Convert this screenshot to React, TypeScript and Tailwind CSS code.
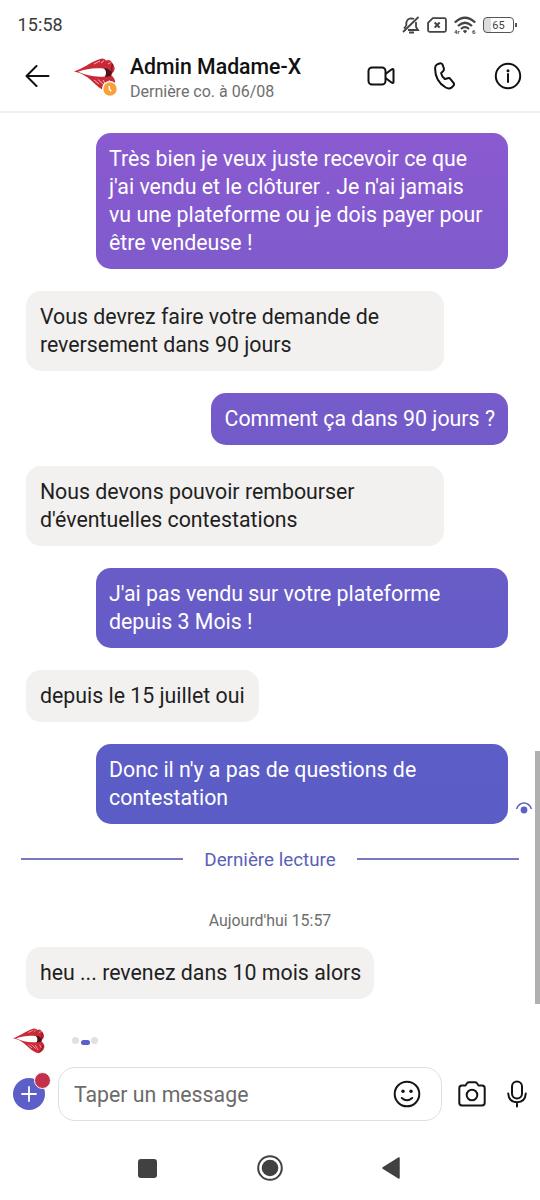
import React from 'react';

type Message = {
    from: 'me' | 'them';
    lines: string[];
    className: string;
};

const messages: Message[] = [
    {
        from: 'me',
        lines: ["Très bien je veux juste recevoir ce que", "j'ai vendu et le clôturer . Je n'ai jamais", "vu une plateforme ou je dois payer pour", "être vendeuse !"],
        className: "w-[412.5px] from-[#8a5ad0] to-[#7f5bcc]"
    },
    {
        from: 'them',
        lines: ["Vous devrez faire votre demande de", "reversement dans 90 jours"],
        className: "w-[418px]"
    },
    {
        from: 'me',
        lines: ["Comment ça dans 90 jours ?"],
        className: "w-[297px] from-[#775bca] to-[#725bc9]"
    },
    {
        from: 'them',
        lines: ["Nous devons pouvoir rembourser", "d'éventuelles contestations"],
        className: "w-[418px]"
    },
    {
        from: 'me',
        lines: ["J'ai pas vendu sur votre plateforme", "depuis 3 Mois !"],
        className: "w-[412.5px] from-[#695cc7] to-[#655cc7]"
    },
    {
        from: 'them',
        lines: ["depuis le 15 juillet oui"],
        className: "w-[233px]"
    },
    {
        from: 'me',
        lines: ["Donc il n'y a pas de questions de", "contestation"],
        className: "w-[412.5px] from-[#5c5dc7] to-[#5b5cc5]"
    }
];

const Lips = ({ className }: { className: string }) => (
    <svg viewBox="0 0 42 34" className={className}>
        <path d="M0 13.5 C8 11 17 4 26 1 Q30 -.5 32 2.5 Q36 1 38 4.5 Q42 9 40 13 L37 17 Q42 21 41 26 Q39 32 33 33 Q27 32 21 26 C14 19 8 15 0 13.5Z" fill="#c92a38" />
        <path d="M28 10 L33 10.5 L38 14 L37 18 L31 19Z" fill="#4d1219" />
        <path d="M4 13.8 C12 10.5 21 9.5 30 10.5 Q33.5 14 31 18.5 C20 19.5 12 17 4 13.8Z" fill="#fff" />
        <path d="M20 6 L26 3 M27 5 L30 2.5 M34 6 L36.5 4.5 M20 22 L25 26 M24 21.5 L30 27 M29 22 L33 29 M35 22 L37 26" stroke="#f6b3b3" strokeWidth="1" />
        <path d="M38.5 6 Q37 11 38 14 M34 32 Q38 29 39.5 23" stroke="#7b1420" strokeWidth="1.2" fill="none" />
    </svg>
);

const StatusBar = () => (
    <div className="flex h-10 items-center justify-between pt-[10px] pl-[17.5px] pr-[23px]">
        <span className="text-[18px] leading-none tracking-[0.1px] text-[#3a3a3a]">15:58</span>
        <div className="flex items-center gap-[7px] text-[#444]">
            <svg width="18" height="18" viewBox="0 0 18 18" fill="none" stroke="currentColor" strokeWidth="1.8">
                <path d="M1 16 L16.5 1 M4.3 10 V7 Q5 2.5 9 2.3 Q10.5 2.3 12 3 M14 6 V11 L16 14 H6 M2 12.5 L4 10 M7 16.5 H12" />
            </svg>
            <svg width="20" height="16" viewBox="0 0 19 15" fill="none" stroke="currentColor" strokeWidth="1.7">
                <path d="M5.5 1 H16.5 Q18 1 18 2.5 V12.5 Q18 14 16.5 14 H2.5 Q1 14 1 12.5 V5.5 Z" />
                <path d="M7.3 5.2 L12 10 M12 5.2 L7.3 10" strokeWidth="2" />
            </svg>
            <svg width="22" height="18" viewBox="0 0 22 18" fill="none" stroke="currentColor" strokeWidth="2.3">
                <path d="M.8 6.5 Q11 -3 21.2 6.5 M4 10 Q11 3.5 18 10 M7 13 Q11 9.3 15 13" />
                <path d="M8.8 15 Q11 13 13.2 15 L11 17.5Z" fill="currentColor" stroke="none" />
                <text x="0" y="18" fontSize="6" fontWeight="700" fill="currentColor" stroke="none">4r</text>
                <text x="18" y="18" fontSize="6" fontWeight="700" fill="currentColor" stroke="none">6</text>
            </svg>
            <div className="flex items-center gap-px">
                <div className="flex h-[16px] w-[31px] items-center justify-center rounded-[4px] border-[1.5px] border-[#555] bg-linear-to-r from-[#ddd] from-25% to-white to-25% text-[11px] leading-none">65</div>
                <div className="h-[4px] w-[2px] bg-[#555]"></div>
            </div>
        </div>
    </div>
);

const Header = () => (
    <header className="flex h-[73px] items-center border-b-2 border-[#f0f0f0] pl-[25px]">
        <svg width="25" height="22" viewBox="0 0 25 22" fill="none" stroke="#111" strokeWidth="2" strokeLinecap="round" strokeLinejoin="round">
            <path d="M11.5 1 L1.5 11 L11.5 21 M2 11 H23.5" />
        </svg>
        <div className="relative ml-[24px] h-[42px] w-[42px]">
            <Lips className="mt-[3px] h-[34px] w-[42px]" />
            <svg className="absolute top-[26px] left-[28px]" width="16" height="16" viewBox="0 0 16 16">
                <circle cx="8" cy="8" r="8" fill="#fff" />
                <circle cx="8" cy="8" r="6.7" fill="#f8a13c" />
                <path d="M7.3 5 V8.3 L9.3 10.3" stroke="#fff" strokeWidth="1.4" fill="none" />
            </svg>
        </div>
        <div className="ml-[14px] flex-1 pt-[6px]">
            <div className="text-[21.25px] leading-[26px] font-medium text-[#111]">Admin Madame-X</div>
            <div className="text-[16px] leading-[24px] text-[#6e6e6e]">Dernière co. à 06/08</div>
        </div>
        <div className="flex items-center pr-[18px] text-[#111]">
            <svg width="28" height="20" viewBox="0 0 28 20" fill="none" stroke="currentColor" strokeWidth="2" strokeLinejoin="round">
                <rect x="1.5" y="1.5" width="17" height="17" rx="3.5" />
                <path d="M18.5 8 L24.8 3.3 Q26.5 2.5 26.5 4.3 V15.7 Q26.5 17.5 24.8 16.7 L18.5 12" />
            </svg>
            <svg className="ml-[39px]" width="22" height="28" viewBox="0 0 22 28" fill="none" stroke="currentColor" strokeWidth="2" strokeLinejoin="round">
                <path d="M3.2 2.4 L5.5 1.5 Q7.9 .8 8.8 3.2 L9.8 6.2 Q10.3 7.8 9.2 9 L7.1 11.1 Q7.6 14.2 10.8 17 L13.8 16.2 Q15.5 15.8 16.5 17.1 L19.5 20.8 Q20.7 22.5 19.2 24 L17.5 25.6 Q15 27.4 11.7 25.5 C4 20.8 1 13.8 1.1 6 Q1.2 3.4 3.2 2.4Z" />
            </svg>
            <svg className="ml-[38px]" width="28" height="28" viewBox="0 0 28 28" fill="none" stroke="currentColor" strokeWidth="2">
                <circle cx="14" cy="14" r="12.2" />
                <path d="M14 12 V20" strokeLinecap="round" />
                <circle cx="14" cy="8.7" r="1.5" fill="currentColor" stroke="none" />
            </svg>
        </div>
    </header>
);

const Bubble = ({ message }: { message: Message }) => {
    const side = message.from === 'me'
        ? "self-end bg-linear-to-b text-white"
        : "self-start bg-[#f2f1f0] text-[#1f1f1f]";

    return (
        <div className={`rounded-[15px] px-[13.5px] py-3 text-[21.33px] leading-7 whitespace-nowrap ${side} ${message.className}`}>
            {message.lines.map((line) => (
                <div key={line}>{line}</div>
            ))}
        </div>
    );
};

const Composer = () => (
    <div className="flex items-center pl-[13px] text-[#151515]">
        <div className="relative flex h-8 w-8 items-center justify-center rounded-full bg-[#5b5fc7]">
            <svg width="16" height="16" viewBox="0 0 16 16" stroke="#fff" strokeWidth="1.8" strokeLinecap="round">
                <path d="M8 1 V15 M1 8 H15" />
            </svg>
            <span className="absolute -top-[6px] left-[20.5px] h-[17px] w-[17px] rounded-full border-[1.5px] border-white bg-[#c4314b]"></span>
        </div>
        <div className="ml-[13px] flex h-[54px] w-[384px] items-center justify-between rounded-[17px] border-[1.5px] border-[#dfdfdf] pr-[20px] pl-[15px]">
            <span className="pt-px text-[21.3px] text-[#6b6b6b]">Taper un message</span>
            <svg width="28" height="28" viewBox="0 0 28 28" fill="none" stroke="currentColor" strokeWidth="2">
                <circle cx="14" cy="14" r="12.3" />
                <path d="M8.8 18 Q14 22.5 19.2 18" strokeLinecap="round" />
                <circle cx="10" cy="11.3" r="1.7" fill="currentColor" stroke="none" />
                <circle cx="18" cy="11.3" r="1.7" fill="currentColor" stroke="none" />
            </svg>
        </div>
        <svg className="ml-[16px]" width="28" height="26" viewBox="0 0 28 26" fill="none" stroke="currentColor" strokeWidth="2" strokeLinejoin="round">
            <path d="M4 4.5 H7.5 L9 2.3 Q9.7 1.3 11 1.3 H17 Q18.3 1.3 19 2.3 L20.5 4.5 H24 Q26.7 4.5 26.7 7.2 V21.8 Q26.7 24.5 24 24.5 H4 Q1.3 24.5 1.3 21.8 V7.2 Q1.3 4.5 4 4.5Z" />
            <circle cx="14" cy="14" r="5.3" />
        </svg>
        <svg className="ml-[21px]" width="20" height="28" viewBox="0 0 20 28" fill="none" stroke="currentColor" strokeWidth="2" strokeLinecap="round">
            <rect x="5" y="1.5" width="10" height="17" rx="5" />
            <path d="M1.2 13.5 Q1.8 22 10 22.3 Q18.2 22 18.8 13.5 M10 22.3 V26.5" />
        </svg>
    </div>
);

const NavBar = () => (
    <nav className="flex items-center pl-[138px] text-[#414141]">
        <div className="h-[19px] w-[19px] rounded-[3px] bg-[#414141]"></div>
        <svg className="ml-[100px]" width="26" height="26" viewBox="0 0 26 26">
            <circle cx="13" cy="13" r="11.8" fill="none" stroke="currentColor" strokeWidth="2" />
            <circle cx="13" cy="13" r="8.3" fill="currentColor" />
        </svg>
        <svg className="ml-[99px]" width="18" height="22" viewBox="0 0 18 22">
            <path d="M1 11 L17 1 V21Z" fill="currentColor" stroke="currentColor" strokeWidth="1.5" strokeLinejoin="round" />
        </svg>
    </nav>
);

const App = () => {
    return (
        <div className="relative flex h-[1200px] w-[540px] flex-col overflow-hidden bg-white font-[Roboto,sans-serif]">
            <StatusBar />
            <Header />

            {/* Conversation */}
            <main className="flex h-[711px] flex-col gap-[21.75px] pt-5 pr-8 pl-[26.4px]">
                {messages.map((message) => (
                    <Bubble key={message.lines[0]} message={message} />
                ))}
            </main>

            {/* Last read divider */}
            <div className="flex h-[70px] items-center justify-between px-[21px] text-[18.8px] text-[#5b5fb8]">
                <div className="h-[2px] w-[162px] bg-[#7779bd]"></div>
                <span className="pt-[2px]">Dernière lecture</span>
                <div className="h-[2px] w-[162px] bg-[#7779bd]"></div>
            </div>

            <div className="mt-[15px] text-center text-[15.9px] leading-6 text-[#6e6e6e]">Aujourd'hui 15:57</div>
            <div className="mt-[14px] flex flex-col pl-[26.4px]">
                <Bubble message={{ from: 'them', lines: ["heu ... revenez dans 10 mois alors"], className: "w-[348px]" }} />
            </div>

            {/* Typing indicator */}
            <div className="flex h-[68px] items-center pt-[15px] pl-[13px]">
                <Lips className="h-[26px] w-8" />
                <div className="ml-[27px] flex items-center gap-[1.5px]">
                    <span className="h-[7px] w-[7px] rounded-full bg-[#e0e0e0]"></span>
                    <span className="mt-[3px] h-[5px] w-[9px] rounded-full bg-[#5b5fc7]"></span>
                    <span className="h-[7px] w-[7px] rounded-full bg-[#e0e0e0]"></span>
                </div>
            </div>

            <Composer />
            <div className="mt-[34px]">
                <NavBar />
            </div>

            {/* Seen marker and scrollbar */}
            <svg className="absolute top-[801px] left-[515px]" width="18" height="14" viewBox="0 0 18 14">
                <path d="M1.5 8 Q4 2 9 2 Q14 2 16.5 8" fill="none" stroke="#5b5fc7" strokeWidth="1.5" />
                <circle cx="9" cy="9" r="3.4" fill="#5b5fc7" />
            </svg>
            <div className="absolute top-[751px] right-0 h-[253px] w-[5px] bg-[#b0b0b0]"></div>
        </div>
    );
};

export default App;
